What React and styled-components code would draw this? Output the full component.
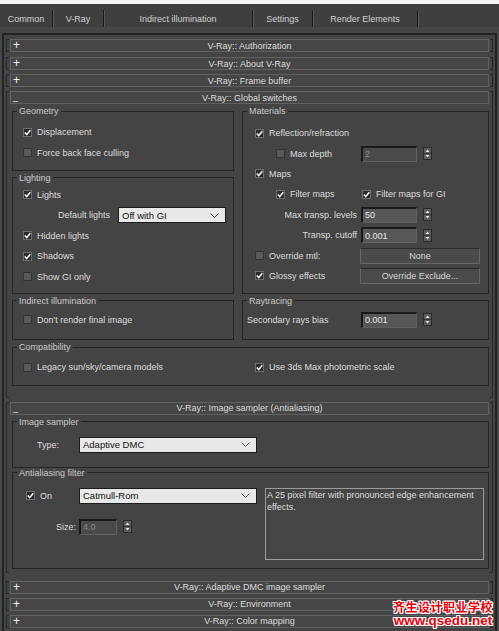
import React from "react";
import styled, { createGlobalStyle } from "styled-components";

const GlobalStyle = createGlobalStyle`
  html, body {
    margin: 0;
    padding: 0;
    background: #444444;
  }
  body {
    font-family: "Liberation Sans", Arial, sans-serif;
    font-size: 9px;
    color: #dadada;
  }
`;

const Window = styled.div`
  position: relative;
  width: 499px;
  height: 631px;
  box-sizing: border-box;
  overflow: hidden;
  display: flex;
  flex-direction: column;
  background: #464646;
  border-top: 4px solid #f4f4f4;
`;

const TabBar = styled.div`
  display: flex;
  align-items: flex-end;
  height: 23px;
  background: #3f3f3f;
`;

const Tab = styled.div`
  width: ${(p) => p.$w}px;
  height: 17px;
  display: flex;
  align-items: center;
  justify-content: center;
  border-right: 1px solid #1a1a1a;
  box-shadow: 1px 0 0 #575757;
  color: #cfcfcf;
`;

const Panel = styled.div`
  flex: 1;
  margin: 6px 2px 0 2px;
  border: 2px solid #232323;
  border-bottom: none;
  padding-top: 4px;
  display: flex;
  flex-direction: column;
  gap: 4px;
  background: #444444;
`;

const Rollout = styled.section`
  position: relative;
  margin: ${(p) => p.$before ?? 0}px 2px ${(p) => p.$after ?? 0}px 2px;
  padding: 0 4px;
  &::before,
  &::after {
    content: "";
    position: absolute;
    top: 0;
    bottom: 0;
    width: 2px;
    border: 1px solid #272727;
  }
  &::before {
    left: 0;
    border-right: none;
  }
  &::after {
    right: 0;
    border-left: none;
  }
`;

const RollHeader = styled.div`
  height: 13px;
  box-sizing: border-box;
  border: 1px solid #616161;
  background: #464646;
  display: grid;
  grid-template-columns: 1fr auto 1fr;
  align-items: center;
  color: #dcdcdc;
`;

const Sign = styled.span`
  padding-left: 2px;
  color: #f2f2f2;
  font-size: ${(p) => (p.$open ? 9 : 12)}px;
  line-height: 11px;
  align-self: ${(p) => (p.$open ? "end" : "center")};
`;

const RollBody = styled.div`
  padding: ${(p) => p.$pt}px 0 ${(p) => p.$pb}px 2px;
`;

const SwitchGrid = styled.div`
  display: grid;
  grid-template-columns: 222px 247px;
  column-gap: 8px;
  row-gap: 2px;
`;

const Group = styled.fieldset`
  margin: 0;
  min-width: 0;
  border: 1px solid #262626;
  padding: ${(p) => p.$pt ?? 5}px 4px ${(p) => p.$pb ?? 6}px 4px;
  grid-column: ${(p) => (p.$wide ? "1 / -1" : "auto")};
  grid-row: ${(p) => (p.$tall ? "span 2" : "auto")};
`;

const Legend = styled.legend`
  padding: 0 2px;
  line-height: 10px;
  color: #c9c9c9;
`;

const Row = styled.div`
  display: flex;
  align-items: center;
  height: ${(p) => p.$h ?? 20.4}px;
  padding-left: ${(p) => p.$indent ?? 0}px;
`;

const Cell = styled.div`
  width: ${(p) => p.$w}px;
  flex: none;
  display: flex;
  align-items: center;
  box-sizing: border-box;
  padding-left: ${(p) => p.$indent ?? 0}px;
  padding-right: ${(p) => p.$pr ?? 0}px;
  justify-content: ${(p) => (p.$right ? "flex-end" : "flex-start")};
`;

const CheckBox = styled.span`
  width: 9px;
  height: 9px;
  flex: none;
  box-sizing: border-box;
  display: flex;
  align-items: center;
  justify-content: center;
  margin-right: 5px;
  background: ${(p) => (p.$on ? "#2c2c2c" : "#585858")};
  border: 1px solid ${(p) => (p.$on ? "#6e6e6e" : "#333333")};
`;

const Label = styled.span`
  color: #dcdcdc;
  white-space: nowrap;
`;

const NumBox = styled.div`
  width: ${(p) => p.$w ?? 56}px;
  height: 16px;
  box-sizing: border-box;
  flex: none;
  display: flex;
  align-items: center;
  padding-left: 2px;
  background: ${(p) => (p.$off ? "#4a4a4a" : "#575757")};
  color: ${(p) => (p.$off ? "#8a8a8a" : "#e6e6e6")};
  border-top: 2px solid #191919;
  border-left: 2px solid #191919;
  border-right: 1px solid #606060;
  border-bottom: 1px solid #606060;
`;

const SpinBox = styled.span`
  width: 9px;
  height: 13px;
  flex: none;
  box-sizing: border-box;
  margin-left: 6px;
  display: flex;
  align-items: center;
  justify-content: center;
  background: #5c5c5c;
  border: 1px solid #2b2b2b;
`;

const Select = styled.div`
  width: ${(p) => p.$w}px;
  height: 16px;
  flex: none;
  box-sizing: border-box;
  display: flex;
  align-items: center;
  justify-content: space-between;
  padding: 0 6px 0 3px;
  background: #e8e8e8;
  border: 1px solid #1c1c1c;
  color: #111111;
  font-size: 9.5px;
`;

const MaxButton = styled.div`
  width: 120px;
  height: 16px;
  flex: none;
  box-sizing: border-box;
  display: flex;
  align-items: center;
  justify-content: center;
  background: #4a4a4a;
  border: 1px solid #666666;
  border-top-color: #2c2c2c;
  color: #d6d6d6;
`;

const FilterLayout = styled.div`
  display: flex;
  align-items: flex-start;
`;

const FilterLeft = styled.div`
  width: 239px;
  flex: none;
  display: flex;
  flex-direction: column;
  gap: 15px;
`;

const Desc = styled.div`
  width: 219px;
  height: 72px;
  margin-left: 9px;
  box-sizing: border-box;
  padding: 0 1px;
  border: 1px solid #9b9b9b;
  background: #454545;
  color: #dddddd;
  line-height: 12.5px;
`;

const Watermark = styled.div`
  position: absolute;
  right: 6px;
  bottom: 3px;
  display: flex;
  flex-direction: column;
  align-items: center;
  gap: 1px;
  color: #e6000a;
  font-weight: bold;
  text-shadow: 1px 0 #fff, -1px 0 #fff, 0 1px #fff, 0 -1px #fff, 1px 1px #fff,
    -1px -1px #fff, 1px -1px #fff, -1px 1px #fff;
`;

const WmCn = styled.span`
  font-family: "Noto Sans CJK SC", sans-serif;
  font-size: 12px;
  line-height: 13px;
  letter-spacing: 0.5px;
`;

const WmUrl = styled.span`
  font-family: "Liberation Sans", Arial, sans-serif;
  font-size: 13.5px;
  line-height: 14px;
`;

const Check = ({ on }) => (
  <CheckBox $on={on}>
    {on && (
      <svg width="7" height="7" viewBox="0 0 7 7">
        <polyline
          points="0.8,3.5 2.7,5.6 6.3,1.2"
          fill="none"
          stroke="#ffffff"
          strokeWidth="1.5"
        />
      </svg>
    )}
  </CheckBox>
);

const CheckItem = ({ on, children }) => (
  <>
    <Check on={on} />
    <Label>{children}</Label>
  </>
);

const Spinner = () => (
  <SpinBox>
    <svg width="7" height="11" viewBox="0 0 7 11">
      <path d="M3.5 1.5 L5.5 4 H1.5 Z M3.5 9.5 L5.5 7 H1.5 Z" fill="#e0e0e0" />
      <line x1="0" y1="5.5" x2="7" y2="5.5" stroke="#333" strokeWidth="1" />
    </svg>
  </SpinBox>
);

const Dropdown = ({ w, children }) => (
  <Select $w={w}>
    <span>{children}</span>
    <svg width="9" height="5" viewBox="0 0 9 5">
      <polyline points="0.5,0.5 4.5,4.5 8.5,0.5" fill="none" stroke="#555" />
    </svg>
  </Select>
);

const Header = ({ open, title }) => (
  <RollHeader>
    <Sign $open={open}>{open ? "_" : "+"}</Sign>
    <span>{title}</span>
    <span />
  </RollHeader>
);

const tabs = [
  ["Common", 52],
  ["V-Ray", 50],
  ["Indirect illumination", 148],
  ["Settings", 59],
  ["Render Elements", 104],
];

export default function App() {
  return (
    <>
      <GlobalStyle />
      <Window>
        <TabBar>
          {tabs.map(([name, w]) => (
            <Tab key={name} $w={w}>
              {name}
            </Tab>
          ))}
        </TabBar>

        <Panel>
          <Rollout>
            <Header title="V-Ray:: Authorization" />
          </Rollout>
          <Rollout $before={1}>
            <Header title="V-Ray:: About V-Ray" />
          </Rollout>
          <Rollout>
            <Header title="V-Ray:: Frame buffer" />
          </Rollout>

          <Rollout>
            <Header open title="V-Ray:: Global switches" />
            <RollBody $pt={2} $pb={12}>
              <SwitchGrid>
                <Group $pt={6} $pb={7}>
                  <Legend>Geometry</Legend>
                  <Row $indent={6}>
                    <CheckItem on>Displacement</CheckItem>
                  </Row>
                  <Row $indent={6}>
                    <CheckItem>Force back face culling</CheckItem>
                  </Row>
                </Group>

                <Group $tall $pt={7} $pb={5}>
                  <Legend>Materials</Legend>
                  <Row $indent={8}>
                    <CheckItem on>Reflection/refraction</CheckItem>
                  </Row>
                  <Row>
                    <Cell $w={114} $indent={29}>
                      <CheckItem>Max depth</CheckItem>
                    </Cell>
                    <NumBox $off>2</NumBox>
                    <Spinner />
                  </Row>
                  <Row $indent={8}>
                    <CheckItem on>Maps</CheckItem>
                  </Row>
                  <Row>
                    <Cell $w={115} $indent={29}>
                      <CheckItem on>Filter maps</CheckItem>
                    </Cell>
                    <CheckItem on>Filter maps for GI</CheckItem>
                  </Row>
                  <Row>
                    <Cell $w={114} $right $pr={4}>
                      <Label>Max transp. levels</Label>
                    </Cell>
                    <NumBox>50</NumBox>
                    <Spinner />
                  </Row>
                  <Row>
                    <Cell $w={114} $right $pr={4}>
                      <Label>Transp. cutoff</Label>
                    </Cell>
                    <NumBox>0.001</NumBox>
                    <Spinner />
                  </Row>
                  <Row>
                    <Cell $w={113} $indent={8}>
                      <CheckItem>Override mtl:</CheckItem>
                    </Cell>
                    <MaxButton>None</MaxButton>
                  </Row>
                  <Row>
                    <Cell $w={113} $indent={8}>
                      <CheckItem on>Glossy effects</CheckItem>
                    </Cell>
                    <MaxButton>Override Exclude...</MaxButton>
                  </Row>
                </Group>

                <Group $pt={2} $pb={6}>
                  <Legend>Lighting</Legend>
                  <Row $indent={6}>
                    <CheckItem on>Lights</CheckItem>
                  </Row>
                  <Row>
                    <Cell $w={93} $right>
                      <Label>Default lights</Label>
                    </Cell>
                    <Cell $w={8} />
                    <Dropdown w={108}>Off with GI</Dropdown>
                  </Row>
                  <Row $indent={6}>
                    <CheckItem on>Hidden lights</CheckItem>
                  </Row>
                  <Row $indent={6}>
                    <CheckItem on>Shadows</CheckItem>
                  </Row>
                  <Row $indent={6}>
                    <CheckItem>Show GI only</CheckItem>
                  </Row>
                </Group>

                <Group $pt={4} $pb={9}>
                  <Legend>Indirect illumination</Legend>
                  <Row $indent={6}>
                    <CheckItem>Don't render final image</CheckItem>
                  </Row>
                </Group>

                <Group $pt={4} $pb={9}>
                  <Legend>Raytracing</Legend>
                  <Row>
                    <Cell $w={114}>
                      <Label>Secondary rays bias</Label>
                    </Cell>
                    <NumBox>0.001</NumBox>
                    <Spinner />
                  </Row>
                </Group>

                <Group $wide $pt={5} $pb={7}>
                  <Legend>Compatibility</Legend>
                  <Row>
                    <Cell $w={238} $indent={6}>
                      <CheckItem>Legacy sun/sky/camera models</CheckItem>
                    </Cell>
                    <CheckItem on>Use 3ds Max photometric scale</CheckItem>
                  </Row>
                </Group>
              </SwitchGrid>
            </RollBody>
          </Rollout>

          <Rollout $after={4}>
            <Header open title="V-Ray:: Image sampler (Antialiasing)" />
            <RollBody $pt={2} $pb={4}>
              <Group $pt={10} $pb={14}>
                <Legend>Image sampler</Legend>
                <Row $h={16}>
                  <Cell $w={62} $right $pr={20}>
                    <Label>Type:</Label>
                  </Cell>
                  <Dropdown w={178}>Adaptive DMC</Dropdown>
                </Row>
              </Group>
              <Group $pt={10} $pb={8}>
                <Legend>Antialiasing filter</Legend>
                <FilterLayout>
                  <FilterLeft>
                    <Row $h={16}>
                      <Cell $w={62} $indent={9}>
                        <CheckItem on>On</CheckItem>
                      </Cell>
                      <Dropdown w={178}>Catmull-Rom</Dropdown>
                    </Row>
                    <Row $h={16}>
                      <Cell $w={62} $right $pr={3}>
                        <Label>Size:</Label>
                      </Cell>
                      <NumBox $w={38} $off>
                        4.0
                      </NumBox>
                      <Spinner />
                    </Row>
                  </FilterLeft>
                  <Desc>
                    A 25 pixel filter with pronounced edge enhancement effects.
                  </Desc>
                </FilterLayout>
              </Group>
            </RollBody>
          </Rollout>

          <Rollout>
            <Header title="V-Ray:: Adaptive DMC image sampler" />
          </Rollout>
          <Rollout>
            <Header title="V-Ray:: Environment" />
          </Rollout>
          <Rollout>
            <Header title="V-Ray:: Color mapping" />
          </Rollout>
        </Panel>

        <Watermark>
          <WmCn>齐生设计职业学校</WmCn>
          <WmUrl>www.qsedu.net</WmUrl>
        </Watermark>
      </Window>
    </>
  );
}
